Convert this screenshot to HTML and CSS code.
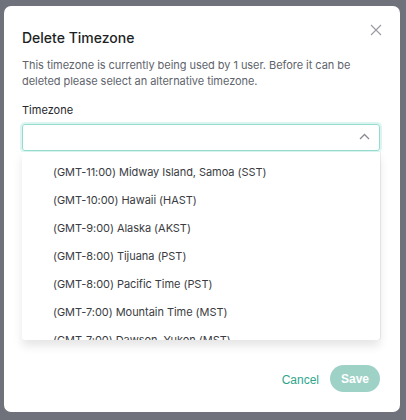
FILE: index.html
```html
<!DOCTYPE html>
<html>
<head>
<meta charset="utf-8">
<link rel="stylesheet" href="styles.css">
</head>
<body>
<div class="modal">
  <button class="close" aria-label="Close">
    <svg width="12" height="12" viewBox="0 0 12 12"><path d="M1 1L11 11M11 1L1 11" stroke="#9a9aa2" stroke-width="1.1" fill="none"/></svg>
  </button>
  <h2 class="title">Delete Timezone</h2>
  <p class="desc">This timezone is currently being used by 1 user. Before it can be deleted please select an alternative timezone.</p>
  <label class="label">Timezone</label>
  <div class="field">
    <div class="input">
      <svg class="chev" width="11" height="7" viewBox="0 0 11 7"><path d="M1 6L5.5 1.5L10 6" stroke="#8a8a92" stroke-width="1.3" fill="none"/></svg>
    </div>
    <ul class="menu">
      <li>(GMT-11:00) Midway Island, Samoa (SST)</li>
      <li>(GMT-10:00) Hawaii (HAST)</li>
      <li>(GMT-9:00) Alaska (AKST)</li>
      <li>(GMT-8:00) Tijuana (PST)</li>
      <li>(GMT-8:00) Pacific Time (PST)</li>
      <li>(GMT-7:00) Mountain Time (MST)</li>
      <li>(GMT-7:00) Dawson, Yukon (MST)</li>
      <li>(GMT-7:00) Arizona (MST)</li>
    </ul>
  </div>
  <div class="footer">
    <button class="cancel">Cancel</button>
    <button class="save">Save</button>
  </div>
</div>
</body>
</html>
```
FILE: styles.css
```css
* { box-sizing: border-box; }
html, body { margin: 0; padding: 0; }
body {
  background: #6f717b;
  width: 406px;
  height: 420px;
  overflow: hidden;
  font-family: Inter, "Noto Sans", sans-serif;
  padding: 6px 6px 0 4px;
}
.modal {
  position: relative;
  width: 396px;
  height: 406px;
  background: #fff;
  border-radius: 7px;
  padding: 23px 20px 20px 18px;
  display: flex;
  flex-direction: column;
}
.close {
  position: absolute;
  top: 18px;
  right: 18px;
  background: none;
  border: 0;
  padding: 0;
  width: 12px;
  height: 12px;
  display: flex;
}
.title {
  margin: 0;
  font-size: 14px;
  font-weight: 500;
  color: #1d1f24;
  line-height: 18px;
}
.desc {
  margin: 10px 0 0;
  font-size: 11px;
  letter-spacing: -0.05px;
  line-height: 16px;
  color: #60646c;
}
.label {
  margin-top: 13px;
  font-size: 11px;
  line-height: 16px;
  color: #25272c;
}
.field {
  position: relative;
  margin-top: 6px;
}
.input {
  height: 27px;
  border: 1px solid #95dcd0;
  border-radius: 3px;
  box-shadow: 0 0 0 2px #dcf5f1;
  display: flex;
  align-items: center;
  justify-content: flex-end;
  padding-right: 9px;
}
.chev { display: block; margin-top: -2px; }
.menu {
  position: absolute;
  left: 0;
  right: 0;
  top: 28px;
  height: 188px;
  overflow: hidden;
  margin: 0;
  padding: 6px 0 0 31px;
  list-style: none;
  background: #fff;
  border-radius: 0 0 3px 3px;
  box-shadow: 0 6px 10px rgba(0,0,0,0.10), 1px 0 0 #eeeeee;
  z-index: 2;
}
.menu li {
  height: 28px;
  line-height: 28px;
  font-size: 11px;
  letter-spacing: -0.05px;
  color: #3a3c42;
  white-space: nowrap;
}
.footer {
  margin-top: auto;
  display: flex;
  justify-content: flex-end;
  align-items: center;
  gap: 11px;
}
.cancel {
  background: none;
  border: 0;
  padding: 0;
  font-family: "Liberation Sans", Arial, sans-serif;
  font-size: 12px;
  color: #2fa58c;
  margin-top: 2px;
}
.save {
  width: 50px;
  height: 27px;
  border: 0;
  border-radius: 14px;
  background: #9fd2c7;
  color: #fff;
  font-family: "Liberation Sans", Arial, sans-serif;
  font-weight: bold;
  font-size: 12px;
}
```
